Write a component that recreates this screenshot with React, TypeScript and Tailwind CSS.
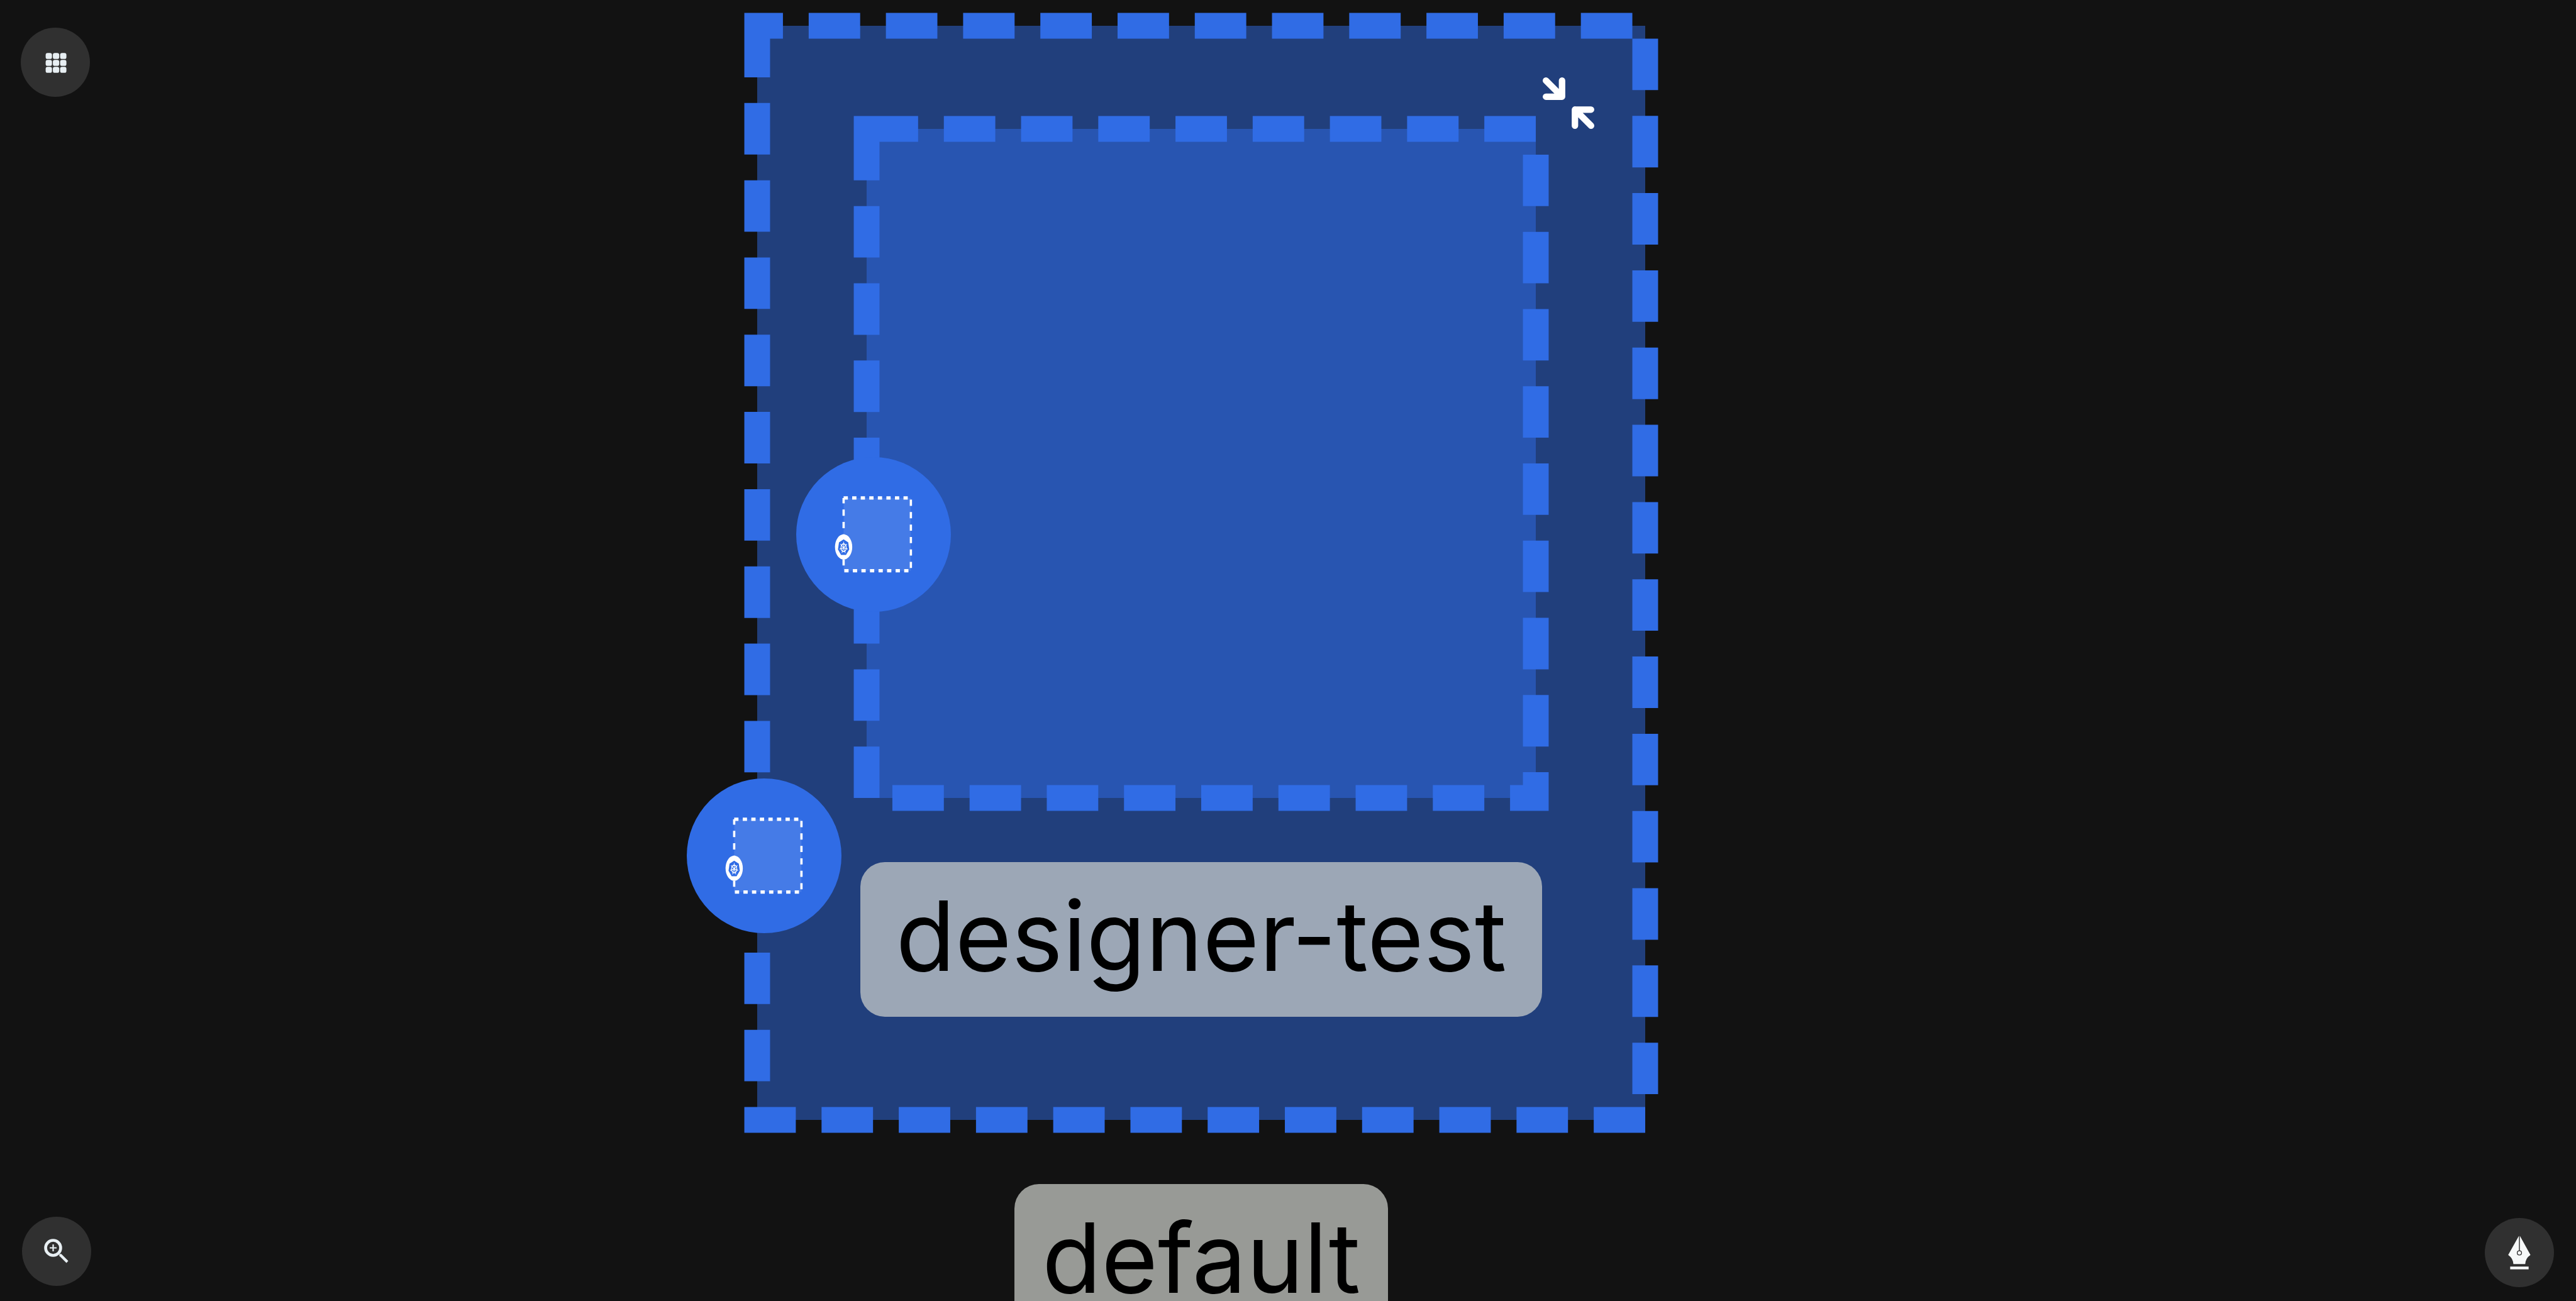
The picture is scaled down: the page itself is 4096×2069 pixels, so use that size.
import React from "react";

const BLUE = "#306ce5";

/* Dashed outline and translucent fill of a group, sized in grid units. */
function GroupOutline({ cols, rows, offset }: { cols: number; rows: number; offset: number }) {
  return (
    <svg
      aria-hidden="true"
      className="pointer-events-none absolute inset-0 h-full w-full overflow-visible"
      viewBox={`0 0 ${cols} ${rows}`}
      preserveAspectRatio="none"
    >
      <rect width={cols} height={rows} fill={BLUE} fillOpacity="0.5" />
      <path
        d={`M0 0H${cols}V${rows}H0Z`}
        fill="none"
        stroke={BLUE}
        strokeWidth="2"
        strokeDasharray="4 2"
        strokeDashoffset={offset}
      />
    </svg>
  );
}

const spokes = [0, 1, 2, 3, 4, 5, 6].map((i) => {
  const a = (i * 2 * Math.PI) / 7 - Math.PI / 2;
  return { x: Math.cos(a), y: Math.sin(a) };
});

/* Namespace glyph: dashed box with a small ship's wheel badge. */
function NamespaceIcon() {
  return (
    <svg aria-hidden="true" className="h-[136px] w-[136px]" viewBox="-3 -1 20 13.75" preserveAspectRatio="none">
      <rect width="15.73" height="11.7" fill="#fff" fillOpacity="0.1" />
      <path
        d="M0 0H15.73V11.7H0V0"
        fill="none"
        stroke="#fff"
        strokeWidth="0.53"
        strokeDasharray="1 1"
      />
      <g transform="translate(0 7.88)">
        <circle r="2.02" fill="#fff" />
        <path d="M0-1.21 1.08-.74 1.31.4.56 1.28H-.6L-1.32.4-1.08-.74Z" fill={BLUE} />
        <g transform="translate(0 0.12)" stroke="#fff" fill="none">
          <circle r="0.62" strokeWidth="0.17" />
          {spokes.map((s, i) => (
            <line key={i} x1="0" y1="0" x2={s.x * 0.95} y2={s.y * 0.95} strokeWidth="0.13" />
          ))}
          <circle r="0.12" fill="#fff" strokeWidth="0.05" />
        </g>
      </g>
    </svg>
  );
}

function NodeBadge({ label, className }: { label: string; className: string }) {
  return (
    <button
      type="button"
      aria-label={label}
      className={`absolute z-10 flex h-[246px] w-[246px] items-center justify-center rounded-full bg-[#306ce5] ${className}`}
    >
      <NamespaceIcon />
    </button>
  );
}

function NodeLabel({ className, children }: { className: string; children: React.ReactNode }) {
  return (
    <div
      className={`relative h-[246px] shrink-0 rounded-[39px] bg-[#d1d4cf]/70 text-center text-[154px] leading-[234px] font-normal whitespace-nowrap text-black ${className}`}
    >
      {children}
    </div>
  );
}

function RoundButton({ label, children }: { label: string; children: React.ReactNode }) {
  return (
    <button
      type="button"
      aria-label={label}
      className="pointer-events-auto h-[110px] w-[110px] rounded-full bg-[#303030]"
    >
      <svg aria-hidden="true" viewBox="0 0 450 450" className="h-full w-full">
        {children}
      </svg>
    </button>
  );
}

export default function App() {
  return (
    <main className="grid h-screen w-full overflow-hidden bg-[#121212] font-['Inter',sans-serif]">
      {/* Graph canvas */}
      <section
        aria-label="default"
        className="relative col-start-1 row-start-1 h-screen overflow-hidden"
      >
        <div className="absolute top-[41px] left-[1204px] flex w-[1412px] flex-col items-center gap-[102px]">
          <div className="relative flex h-[1740px] w-full flex-col items-center gap-[102px] pt-[164px]">
            <GroupOutline cols={69} rows={85} offset={2} />
            <div className="relative h-[1064px] w-[1064px] shrink-0">
              <GroupOutline cols={52} rows={52} offset={0} />
              <NodeBadge label="designer-test namespace" className="top-[522px] -left-[112px]" />
            </div>
            <NodeLabel className="w-[1084px]">designer-test</NodeLabel>
            <NodeBadge label="default namespace" className="top-[1197px] -left-[112px]" />
            <button
              type="button"
              aria-label="Collapse group"
              className="absolute top-[82px] right-[81px] h-[82px] w-[82px]"
            >
              <svg
                aria-hidden="true"
                viewBox="0 0 336 336"
                className="h-full w-full"
                fill="none"
                stroke="#fff"
                strokeWidth="42"
                strokeLinecap="round"
                strokeLinejoin="round"
              >
                <path d="M21 21 126 126M126 21V126H21" />
                <path d="M315 315 210 210M315 210H210V315" />
              </svg>
            </button>
          </div>
          <NodeLabel className="w-[594px]">default</NodeLabel>
        </div>
      </section>

      {/* Floating controls */}
      <div className="pointer-events-none z-20 col-start-1 row-start-1 flex h-screen flex-col justify-between pt-[44px] pr-[35px] pb-[22px] pl-[33px]">
        <nav className="flex">
          <RoundButton label="Open menu">
            {[165, 210, 255].map((y) =>
              [162, 209, 256].map((x) => (
                <rect key={`${x}-${y}`} x={x} y={y} width="41" height="39" rx="13" fill="#e8eff3" />
              )),
            )}
          </RoundButton>
        </nav>

        <div className="flex items-end justify-between">
          <div className="flex pb-[2px] pl-[2px]">
            <RoundButton label="Zoom controls">
              <circle cx="202.5" cy="202.5" r="49" fill="none" stroke="#e8eff3" strokeWidth="19" />
              <path d="M180 202.5H225M202.5 180V225" stroke="#e8eff3" strokeWidth="9" />
              <path d="M243 242H256L301 287 289 301 243 255Z" fill="#e8eff3" />
            </RoundButton>
          </div>
          <div className="flex">
            <RoundButton label="Open designer">
              <path d="M221 118H229L297 240Q264 262 263 300H186Q184 262 152 240Z" fill="#f7f9f9" />
              <path d="M225 114V214" stroke="#303030" strokeWidth="6" />
              <circle cx="225" cy="227" r="14" fill="#f7f9f9" stroke="#303030" strokeWidth="5.5" />
              <rect x="165" y="316" width="120" height="18" fill="#f7f9f9" />
            </RoundButton>
          </div>
        </div>
      </div>
    </main>
  );
}
